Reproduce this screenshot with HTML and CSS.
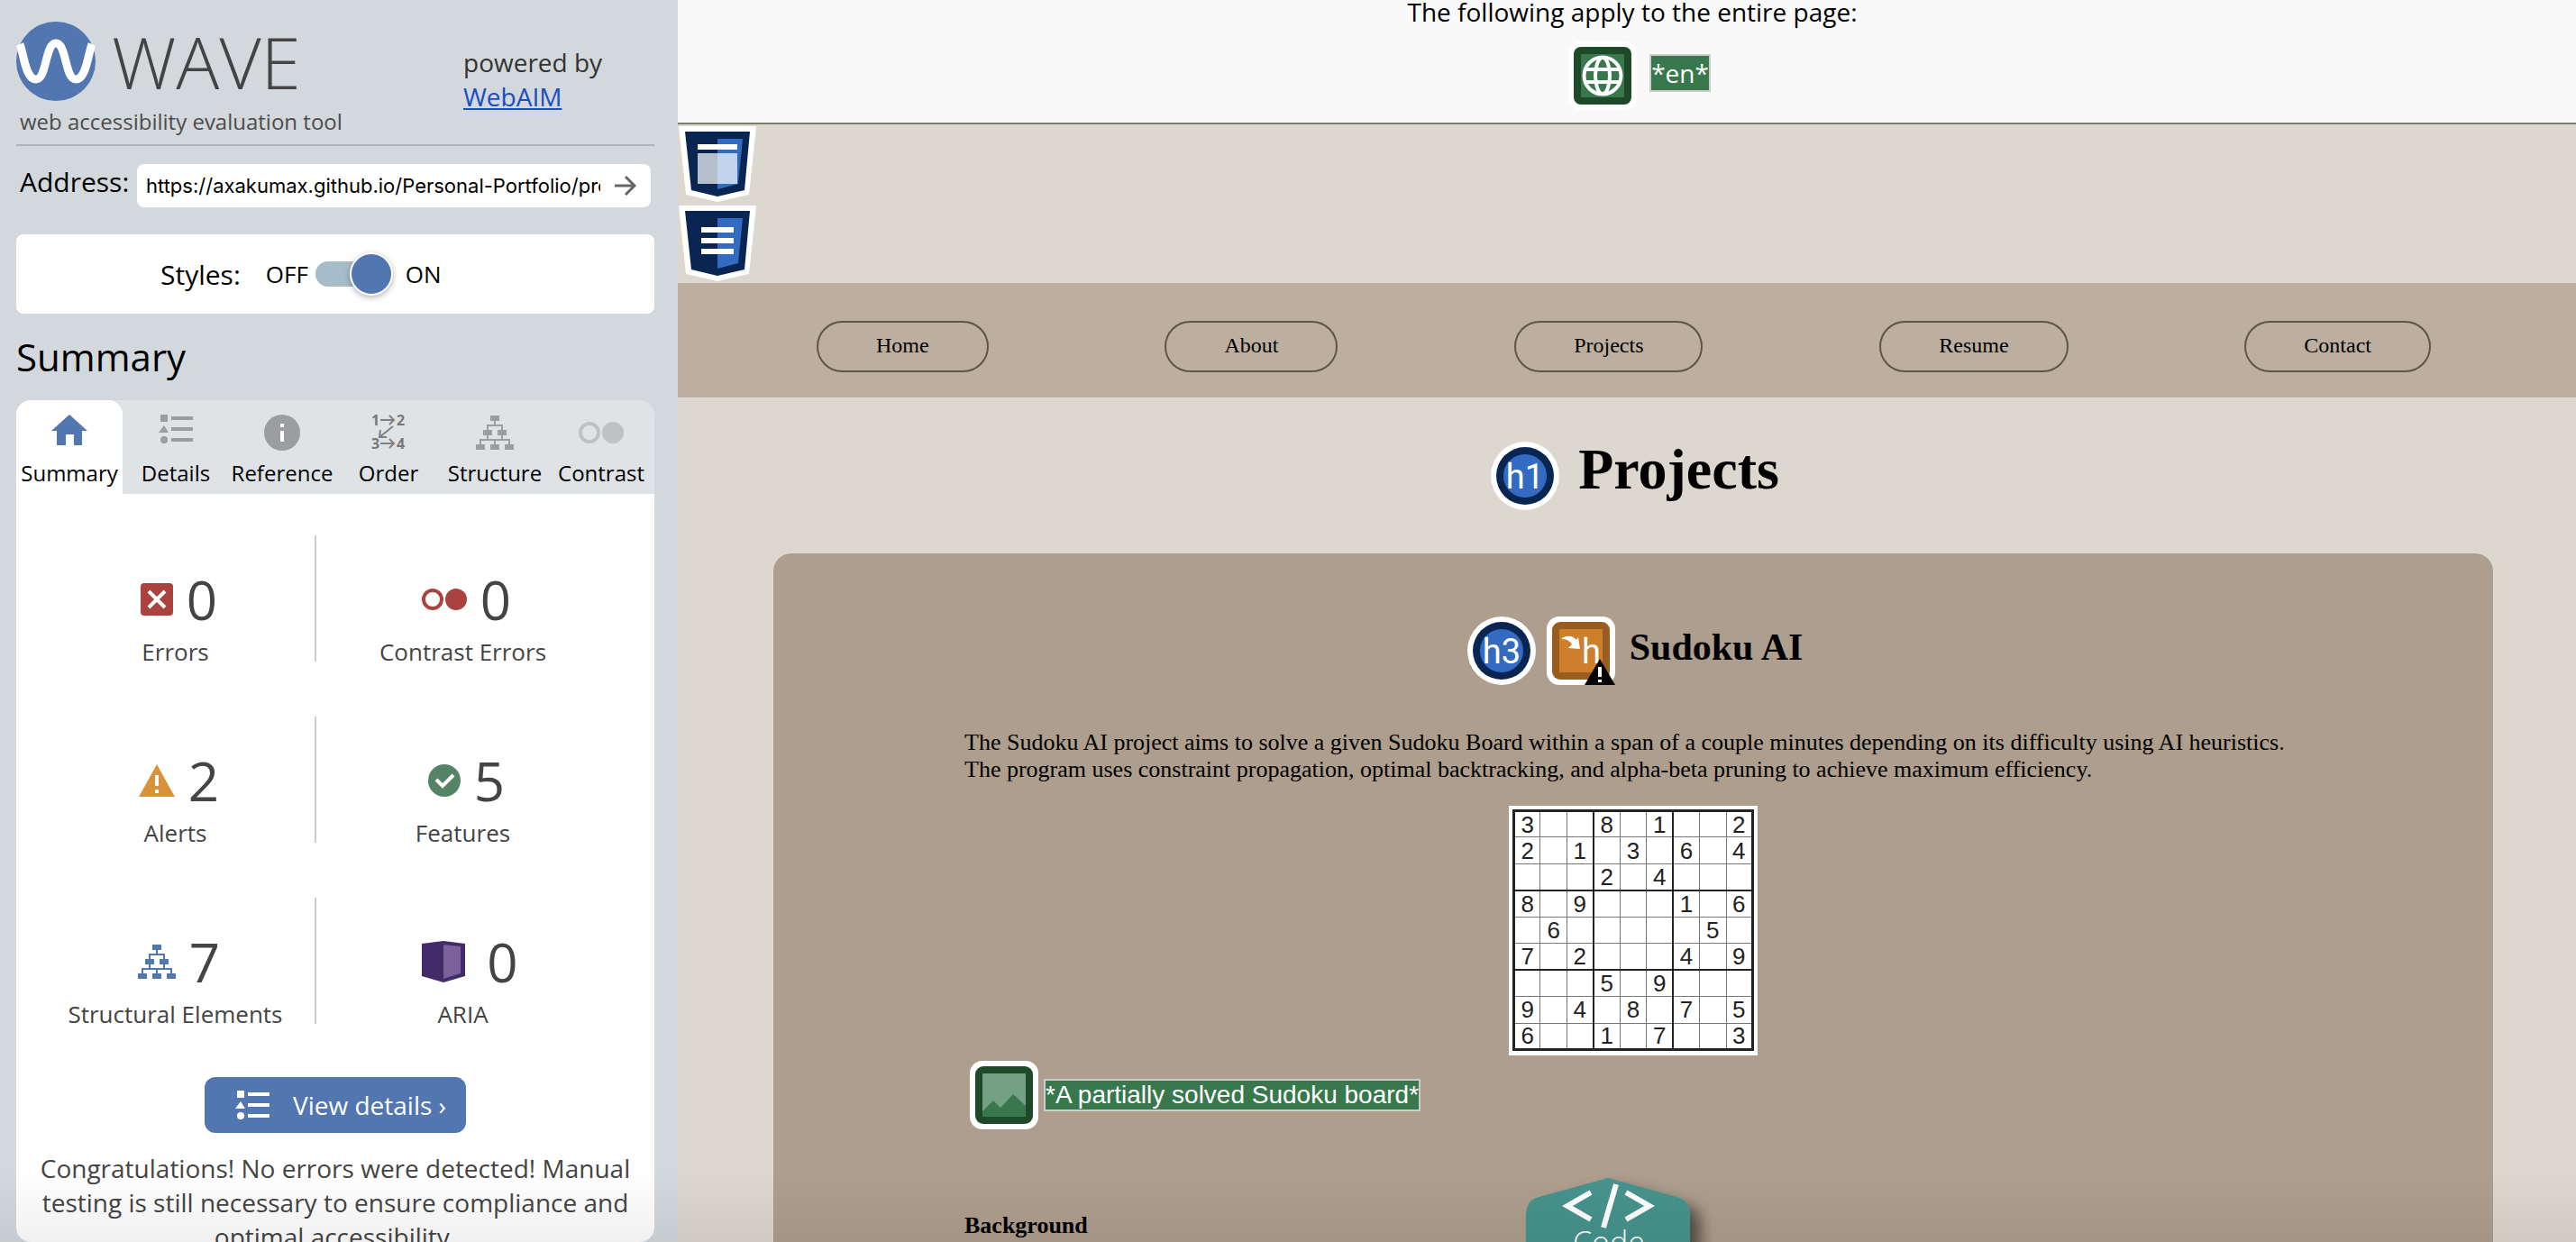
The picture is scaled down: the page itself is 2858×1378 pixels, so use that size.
FILE: index.html
```html
<!DOCTYPE html>
<html lang="en">
<head>
<meta charset="utf-8">
<meta name="viewport" content="width=device-width, initial-scale=1">
<title>WAVE Report</title>
<link rel="stylesheet" href="styles.css">
</head>
<body>
<svg width="0" height="0" class="sprite" aria-hidden="true">
  <symbol id="i-list" viewBox="0 0 38 32"><path d="M2 0h8v8H2zM14 2h24v4H14zM14 14h24v4H14zM14 26h24v4H14zM6 12l5 8H0z"/><circle cx="6" cy="28" r="4"/></symbol>
  <symbol id="i-tree" viewBox="0 0 42 38"><path d="M16 0h10v6H16zM8 16h10v6H8zM24 16h10v6H24zM0 32h10v6H0zM16 32h10v6H16zM32 32h10v6H32z"/><path d="M21 5v6M13 17v-6h16v6M13 21v6M29 21v6M5 33v-6h32v6M21 27v6" fill="none" stroke="currentColor" stroke-width="2"/></symbol>
  <symbol id="i-contrast" viewBox="0 0 50 24"><circle cx="12" cy="12" r="10" fill="none" stroke="currentColor" stroke-width="4"/><circle cx="38" cy="12" r="12"/></symbol>
</svg>
<div class="app">
  <aside class="sidebar">
    <header class="brand">
      <div>
        <div class="logo">
          <svg width="88" height="88" viewBox="0 0 88 88" aria-hidden="true"><circle cx="44" cy="44" r="44" fill="#5276b0"/><path d="M4 25C8 34 10 64 22 64S32 24 44 24 54 64 66 64 80 34 84 25" fill="none" stroke="#fff" stroke-width="9"/></svg>
          <span class="logo-name">WAVE</span>
        </div>
        <p class="tagline">web accessibility evaluation tool</p>
      </div>
      <p class="powered">powered by<br><a href="#">WebAIM</a></p>
    </header>
    <form class="address">
      <label for="url">Address:</label>
      <div class="address-box">
        <input id="url" type="text" value="https://axakumax.github.io/Personal-Portfolio/projects.html">
        <button type="button" aria-label="Go"><svg width="24" height="22" viewBox="0 0 24 22"><path d="M0 11h22M12 1l10 10-10 10" fill="none" stroke="#666" stroke-width="3"/></svg></button>
      </div>
    </form>
    <div class="styles-box">
      <span class="styles-name">Styles:</span>
      <span>OFF</span>
      <input class="toggle" type="checkbox" checked aria-label="Styles">
      <span>ON</span>
    </div>
    <h2>Summary</h2>
    <div class="tabs">
      <button class="tab active" type="button"><span class="tab-icon"><svg width="40" height="40" viewBox="0 0 40 40"><path d="M20 0l20 18h-6v16h-9V22h-9v12H6V18H0z"/></svg></span>Summary</button>
      <button class="tab" type="button"><span class="tab-icon list"><svg width="38" height="32"><use href="#i-list"/></svg></span>Details</button>
      <button class="tab" type="button"><span class="tab-icon"><svg width="40" height="40" viewBox="0 0 40 40"><circle cx="20" cy="20" r="20"/><path d="M18 10h4v4h-4zM18 18h4v12h-4z" fill="#fff"/></svg></span>Reference</button>
      <button class="tab" type="button"><span class="tab-icon"><svg class="order" width="40" height="40" viewBox="0 0 40 40"><text x="1" y="12">1</text><text x="29" y="12">2</text><text x="1" y="38">3</text><text x="29" y="38">4</text><path d="M11 6h15M21 1l5 5-5 5M11 32h15M21 27l5 5-5 5M25 13L10 25M11 17l-1 8h8" fill="none" stroke="#808080" stroke-width="2"/></svg></span>Order</button>
      <button class="tab" type="button"><span class="tab-icon"><svg width="42" height="38"><use href="#i-tree"/></svg></span>Structure</button>
      <button class="tab faint" type="button"><span class="tab-icon"><svg width="50" height="24"><use href="#i-contrast"/></svg></span>Contrast</button>
    </div>
    <section class="panel">
      <ul class="stats">
        <li><div class="stat"><svg width="36" height="36" viewBox="0 0 36 36"><rect width="36" height="36" rx="4" fill="#aa423e"/><path d="M9 9l18 18M27 9L9 27" stroke="#fff" stroke-width="4"/></svg>0</div>Errors</li>
        <li><div class="stat red"><svg width="50" height="24"><use href="#i-contrast"/></svg>0</div>Contrast Errors</li>
        <li><div class="stat"><svg width="40" height="36" viewBox="0 0 40 36"><path d="M20 0l20 36H0z" fill="#d9923a"/><path d="M18 12h4v12h-4zM18 28h4v4h-4z" fill="#fff"/></svg>2</div>Alerts</li>
        <li><div class="stat"><svg width="36" height="36" viewBox="0 0 36 36"><circle cx="18" cy="18" r="18" fill="#558367"/><path d="M9 17l7 7 12-12" fill="none" stroke="#fff" stroke-width="4"/></svg>5</div>Features</li>
        <li><div class="stat blue"><svg width="42" height="38"><use href="#i-tree"/></svg>7</div>Structural Elements</li>
        <li><div class="stat aria"><svg width="48" height="46" viewBox="0 0 48 46"><path d="M24 0l24 3v36L24 46 0 39V3z" fill="#432a69"/><path d="M24 4l19 2v30l-19 6z" fill="#7a6199"/></svg>0</div>ARIA</li>
      </ul>
      <button class="view" type="button"><svg width="38" height="32"><use href="#i-list"/></svg>View details ›</button>
      <p class="congrats">Congratulations! No errors were detected! Manual testing is still necessary to ensure compliance and optimal accessibility.</p>
    </section>
  </aside>

  <main class="page">
    <header class="page-info">
      <p>The following apply to the entire page:</p>
      <div class="page-icons">
        <svg width="76" height="76" viewBox="0 0 76 76"><rect width="76" height="76" rx="14" fill="#fff"/><rect x="6" y="6" width="64" height="64" rx="8" fill="#1e4a29"/><rect x="14" y="14" width="48" height="48" rx="1" fill="#38784c"/><g fill="none" stroke="#fff" stroke-width="4"><circle cx="38" cy="38" r="20.500"/><ellipse cx="38" cy="38" rx="8" ry="20"/><path d="M19 31h38M19 45h38"/></g></svg>
        <span class="alt-text lang">*en*</span>
      </div>
    </header>
    <div class="landmarks">
      <svg width="86" height="84" viewBox="0 0 86 84"><path d="M0 0h86l-8 76-35 8L8 76z" fill="#fff"/><path d="M7 6h72l-6 65-30 7-29-7z" fill="#092653"/><path d="M43 14h28l-5 50-23 6z" fill="#336bc3"/><path d="M21 20h44v6H21z" fill="#fff"/><path d="M21 30h44v34H21z" fill="#fff" opacity=".7"/></svg>
      <svg width="86" height="84" viewBox="0 0 86 84"><path d="M0 0h86l-8 76-35 8L8 76z" fill="#fff"/><path d="M7 6h72l-6 65-30 7-29-7z" fill="#092653"/><path d="M43 14h28l-5 50-23 6z" fill="#336bc3"/><path d="M25 24h36v6H25zM25 36h36v6H25zM25 48h36v6H25z" fill="#fff"/></svg>
    </div>
    <nav class="nav">
      <a href="#">Home</a><a href="#">About</a><a href="#">Projects</a><a href="#">Resume</a><a href="#">Contact</a>
    </nav>
    <h1><svg class="badge" width="76" height="76" viewBox="0 0 76 76"><circle cx="38" cy="38" r="38" fill="#fff"/><circle cx="38" cy="38" r="32" fill="#092653"/><circle cx="38" cy="38" r="24" fill="#336bc3"/><text x="38" y="52" text-anchor="middle">h1</text></svg>Projects</h1>
    <article class="card">
      <h3><svg class="badge" width="76" height="76" viewBox="0 0 76 76"><circle cx="38" cy="38" r="38" fill="#fff"/><circle cx="38" cy="38" r="32" fill="#092653"/><circle cx="38" cy="38" r="24" fill="#336bc3"/><text x="38" y="52" text-anchor="middle">h3</text></svg><svg class="badge skip" width="76" height="76" viewBox="0 0 76 76"><rect width="76" height="76" rx="14" fill="#fff"/><rect x="6" y="6" width="64" height="64" rx="9" fill="#995d22"/><rect x="14" y="14" width="48" height="48" rx="1" fill="#ce7f2b"/><path d="M16 25C22 20 29 21 33 26L35 23 37 36 24 35 28 31C25 26 21 25 16 25z" fill="#fff"/><text x="39" y="52">h</text><path d="M59 47l17 29H42z" fill="#000"/><path d="M57 56h4v11h-4zM57 70h4v3h-4z" fill="#fff"/></svg><span>Sudoku AI</span></h3>
      <p class="desc">The Sudoku AI project aims to solve a given Sudoku Board within a span of a couple minutes depending on its difficulty using AI heuristics. The program uses constraint propagation, optimal backtracking, and alpha-beta pruning to achieve maximum efficiency.</p>
      <div class="board">
        <table>
          <tr><td>3<td><td><td>8<td><td>1<td><td><td>2</tr>
          <tr><td>2<td><td>1<td><td>3<td><td>6<td><td>4</tr>
          <tr><td><td><td><td>2<td><td>4<td><td><td></tr>
          <tr><td>8<td><td>9<td><td><td><td>1<td><td>6</tr>
          <tr><td><td>6<td><td><td><td><td><td>5<td></tr>
          <tr><td>7<td><td>2<td><td><td><td>4<td><td>9</tr>
          <tr><td><td><td><td>5<td><td>9<td><td><td></tr>
          <tr><td>9<td><td>4<td><td>8<td><td>7<td><td>5</tr>
          <tr><td>6<td><td><td>1<td><td>7<td><td><td>3</tr>
        </table>
      </div>
      <div class="alt-row">
        <svg width="76" height="76" viewBox="0 0 76 76"><rect width="76" height="76" rx="14" fill="#fff"/><rect x="6" y="6" width="64" height="64" rx="9" fill="#1e4a29"/><rect x="14" y="14" width="48" height="48" rx="1" fill="#74a183"/><path d="M14 56l12-12 8 8 14-15 14 13v11a1 1 0 0 1-1 1H15a1 1 0 0 1-1-1z" fill="#38784c"/></svg>
        <span class="alt-text">*A partially solved Sudoku board*</span>
      </div>
      <div class="background">
        <h4>Background</h4>
        <a class="code" href="#" aria-label="Code"><svg width="184" height="210" viewBox="0 0 184 210"><defs><filter id="sh" x="-20%" y="-20%" width="150%" height="150%"><feDropShadow dx="12" dy="10" stdDeviation="8" flood-opacity=".5"/></filter></defs><path filter="url(#sh)" d="M88 2q4-2 8 0l76 21q10 4 11 18v108q0 14-10 18l-77 40q-4 2-8 0l-77-40q-10-4-10-18V41q1-14 11-18z" fill="#46938d"/><g fill="none" stroke="#fff" stroke-width="6"><path d="M73 17L47 32l26 15M112 17l26 15-26 15"/><path d="M101 8L87 56"/></g><text x="93" y="85" text-anchor="middle" class="code-text">Code</text></svg></a>
      </div>
    </article>
  </main>
  <div class="fade"></div>
</div>
</body>
</html>
```

FILE: styles.css
```css
* { box-sizing: border-box; }
body { margin: 0; font-family: "Open Sans", "Noto Sans", sans-serif; background: #dcd7cf; }
h1, h2, h3, h4, p, ul { margin: 0; padding: 0; }
button { font: inherit; border: 0; padding: 0; background: none; }
svg { display: block; flex: none; fill: currentColor; }
.sprite { position: absolute; }

.app { position: relative; display: flex; height: 100vh; overflow: hidden; }

.sidebar {
  flex: none; width: 752px; padding: 24px 26px 0 18px;
  display: flex; flex-direction: column; background: #d3d8dc; color: #000;
}
.brand { display: grid; grid-template-columns: 496px 1fr; padding-bottom: 9px; border-bottom: 2px solid #b0b6b8; }
.logo { display: flex; gap: 18px; }
.logo-name { font-size: 80px; font-weight: 300; line-height: 88px; color: #444; }
.tagline { margin-top: 7px; padding-left: 4px; font-size: 24px; line-height: 32px; color: #4c4c4c; }
.powered { padding-top: 26px; font-size: 28px; line-height: 38px; color: #333; }
.powered a { color: #1a4fc4; }

.address { display: flex; justify-content: space-between; margin-top: 20px; padding: 0 4px; }
.address label { font-size: 30px; line-height: 40px; }
.address-box { display: flex; align-items: center; width: 570px; height: 48px; padding: 0 16px 0 10px; gap: 16px; background: #fff; border-radius: 8px; }
.address input { flex: 1; min-width: 0; height: 40px; border: 0; padding: 0; background: none; color: #000; font: 22px Inter, "Liberation Sans", sans-serif; }

.styles-box { display: flex; align-items: center; height: 88px; margin-top: 30px; padding-left: 160px; background: #fff; border-radius: 8px; font-size: 26px; flex: none; }
.styles-name { margin-right: 28px; font-size: 30px; }
.toggle { appearance: none; width: 82px; height: 28px; margin: 0 18px 0 8px; border-radius: 14px; background: #a6bdc9; display: flex; align-items: center; justify-content: flex-end; }
.toggle::before { content: ""; flex: none; width: 44px; height: 44px; margin-right: -4px; border: 2px solid #fff; border-radius: 50%; background: #5276b0; box-shadow: 0 2px 6px rgba(0,0,0,.3); }

h2 { margin: 20px 0; font-size: 42px; font-weight: 400; line-height: 56px; }

.tabs { display: grid; grid-template-columns: repeat(6, 1fr); flex: none; height: 104px; background: #dfe3e6; border-radius: 16px 16px 0 0; }
.tab { display: flex; flex-direction: column; align-items: center; gap: 8px; padding-top: 16px; font-size: 24px; line-height: 34px; color: #000; white-space: nowrap; }
.tab.active { background: #fff; border-radius: 16px 16px 0 0; }
.tab-icon { display: flex; align-items: center; height: 40px; color: #9c9d9f; }
.tab-icon.list { align-items: flex-start; }
.active .tab-icon { color: #5276b0; }
.faint .tab-icon { color: #bfc1c4; }
.order { overflow: visible; }
.order text { font: 700 16px "Open Sans", sans-serif; fill: #777; }

.panel { flex: 1; min-height: 0; overflow: hidden; padding-top: 46px; background: #fff; border-radius: 0 0 16px 16px; color: #444; text-align: center; }
.stats { display: grid; grid-template-columns: 313fr 325fr; row-gap: 54px; padding: 0 50px 0 20px; list-style: none; font-size: 26px; line-height: 36px; }
.stats li { padding-top: 31px; }
.stats li:nth-child(odd) { background: linear-gradient(#ccc, #ccc) right top / 2px 140px no-repeat; }
.stat { display: flex; align-items: center; justify-content: center; gap: 15px; height: 80px; padding-left: 8px; font-size: 60px; line-height: 80px; }
.red svg { color: #aa423e; }
.blue svg { color: #5276b0; }
.stat.aria { gap: 24px; padding-left: 16px; }
.view { display: flex; align-items: center; justify-content: center; gap: 26px; height: 62px; margin: 52px auto 20px; padding: 0 22px 0 34px; border-radius: 12px; background: #5276b0; color: #fff; font-size: 28px; }
.congrats { padding: 0 20px; font-size: 28px; line-height: 38px; }

.page { flex: 1; min-width: 0; overflow: hidden; color: #000; font-family: "Liberation Serif", serif; }
.page-info { padding: 0 0 14px 12px; border-bottom: 2px solid #788070; background: #f9f9f9; text-align: center; font: 28px/26px "Open Sans", sans-serif; }
.page-icons { display: flex; align-items: center; justify-content: center; gap: 14px; margin-top: 20px; padding-left: 16px; }
.alt-text { border: 2px solid #ccc; background: #38784c; color: #fff; font: 28px/32px "Liberation Sans", sans-serif; white-space: nowrap; }
.alt-text.lang { margin-bottom: 6px; font: 28px/38px "Open Sans", sans-serif; }

.landmarks { display: flex; flex-direction: column; gap: 4px; padding: 2px 1px; }
.nav { display: flex; justify-content: space-between; padding: 42px 161px 28px 154px; background: #bdaf9f; }
.nav a { padding: 0 64px 3px; border: 2px solid #5f5446; border-radius: 29px; color: #000; font-size: 24px; line-height: 50px; text-decoration: none; }

h1 { display: flex; justify-content: center; gap: 21px; margin: 49px 0 48px; padding-left: 18px; font-size: 64px; line-height: 62px; }
.badge text { font: 400 38px Roboto, sans-serif; fill: #fff; }
.card { margin: 0 92px 0 106px; min-height: 1000px; padding: 70px 212px; border-radius: 20px; background: #ae9e8d; }
h3 { display: flex; justify-content: center; gap: 12px; padding-left: 4px; font-size: 42px; line-height: 68px; }
.skip { margin-right: 4px; }
.desc { margin-top: 49px; font-size: 26px; line-height: 30px; }
.board { width: 276px; margin: 25px auto 6px; padding: 4px 4px 5px; background: #fff; }
.board table { width: 268px; height: 268px; border-collapse: collapse; table-layout: fixed; border: 3px solid #222; font: 26px/26px "Liberation Sans", sans-serif; color: #222; }
.board td { height: 29px; padding: 0; border: 1px solid #777; text-align: center; }
.board td:nth-child(3n) { border-right: 2px solid #222; }
.board tr:nth-child(3n) td { border-bottom: 2px solid #222; }
.alt-row { display: flex; align-items: center; gap: 6px; padding-left: 6px; }
.background { display: flex; margin-top: 53px; }
h4 { width: 622px; padding-top: 39px; font-size: 26px; line-height: 30px; }
.code svg { overflow: visible; }
.code-text { font: 300 34px "Open Sans", sans-serif; fill: #fff; }

.fade { position: absolute; left: 0; right: 0; bottom: 0; height: 80px; background: linear-gradient(transparent, rgba(0,0,0,.06)); pointer-events: none; }
```
